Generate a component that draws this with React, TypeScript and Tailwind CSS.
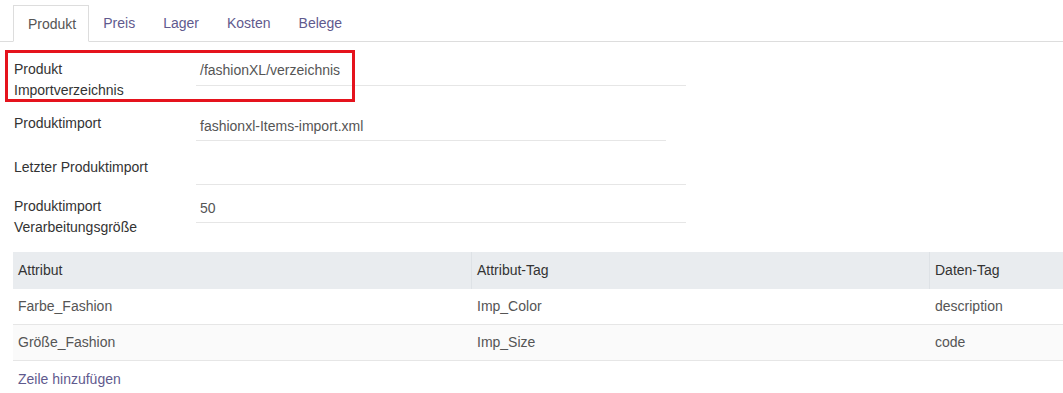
import React from "react";

const tabs = ["Produkt", "Preis", "Lager", "Kosten", "Belege"];

export default function App() {
  return (
    <div
      className="relative w-[1063px] h-[393px] overflow-hidden bg-white text-[14px] text-[#333]"
      style={{ fontFamily: '"Liberation Sans", Arial, sans-serif' }}
    >
      {/* Tabs */}
      <div className="pt-[5px]">
        <div className="flex border-b border-[#dddddd] pl-[13px] h-[37px]">
          {tabs.map((t, i) =>
            i === 0 ? (
              <div
                key={t}
                className="h-[37px] pl-[14px] pr-[12px] border border-[#dddddd] border-b-white bg-white flex items-center text-[#555] leading-[20px]"
              >
                {t}
              </div>
            ) : (
              <div
                key={t}
                className="h-[36px] px-[13px] border border-transparent flex items-center text-[#5f5a8e] leading-[20px]"
              >
                {t}
              </div>
            )
          )}
        </div>
      </div>

      {/* Form rows */}
      <div className="flex items-start mt-[14px]">
        <div className="w-[196px] pl-[14px] pt-[3px] leading-[21px]">
          Produkt
          <br />
          Importverzeichnis
        </div>
        <div className="w-[490px] h-[30px] border-b border-[#e6e6e6] pl-[4px] flex items-center text-[#555]">
          /fashionXL/verzeichnis
        </div>
      </div>

      <div className="flex items-start mt-[10px]">
        <div className="w-[196px] pl-[14px] pt-[2px] leading-[21px]">Produktimport</div>
        <div className="w-[470px] h-[30px] border-b border-[#e6e6e6] pl-[4px] pt-[2px] flex items-center text-[#555]">
          fashionxl-Items-import.xml
        </div>
      </div>

      <div className="flex items-start mt-[14px]">
        <div className="w-[196px] pl-[14px] pt-[2px] leading-[21px]">Letzter Produktimport</div>
        <div className="w-[490px] h-[30px] border-b border-[#e6e6e6]" />
      </div>

      <div className="flex items-start mt-[8px]">
        <div className="w-[196px] pl-[14px] pt-[3px] leading-[21px]">
          Produktimport
          <br />
          Verarbeitungsgröße
        </div>
        <div className="w-[490px] h-[30px] border-b border-[#e6e6e6] pl-[4px] pt-[2px] flex items-center text-[#555]">
          50
        </div>
      </div>

      {/* Table */}
      <div className="ml-[13px] mt-[14px] w-[1376px]">
        <div className="flex h-[37px] bg-[#e9ecef]">
          <div className="w-[459px] pl-[5px] flex items-center border-r border-[#dee2e6]">Attribut</div>
          <div className="w-[458px] pl-[5px] flex items-center border-r border-[#dee2e6]">Attribut-Tag</div>
          <div className="flex-1 pl-[5px] flex items-center">Daten-Tag</div>
        </div>
        <div className="flex h-[36px] bg-white border-b border-[#e6e6e6] text-[#555]">
          <div className="w-[459px] pl-[5px] flex items-center">Farbe_Fashion</div>
          <div className="w-[458px] pl-[5px] flex items-center">Imp_Color</div>
          <div className="flex-1 pl-[5px] flex items-center">description</div>
        </div>
        <div className="flex h-[36px] bg-[#fafafa] border-b border-[#e6e6e6] text-[#555]">
          <div className="w-[459px] pl-[5px] flex items-center">Größe_Fashion</div>
          <div className="w-[458px] pl-[5px] flex items-center">Imp_Size</div>
          <div className="flex-1 pl-[5px] flex items-center">code</div>
        </div>
        <div className="pl-[5px] pt-[8px] leading-[20px] text-[#5f5a8e]">Zeile hinzufügen</div>
      </div>

      {/* Red highlight overlay */}
      <div className="absolute left-[5px] top-[50px] w-[350px] h-[52px] border-[3px] border-[#e5131d] pointer-events-none" />
    </div>
  );
}
